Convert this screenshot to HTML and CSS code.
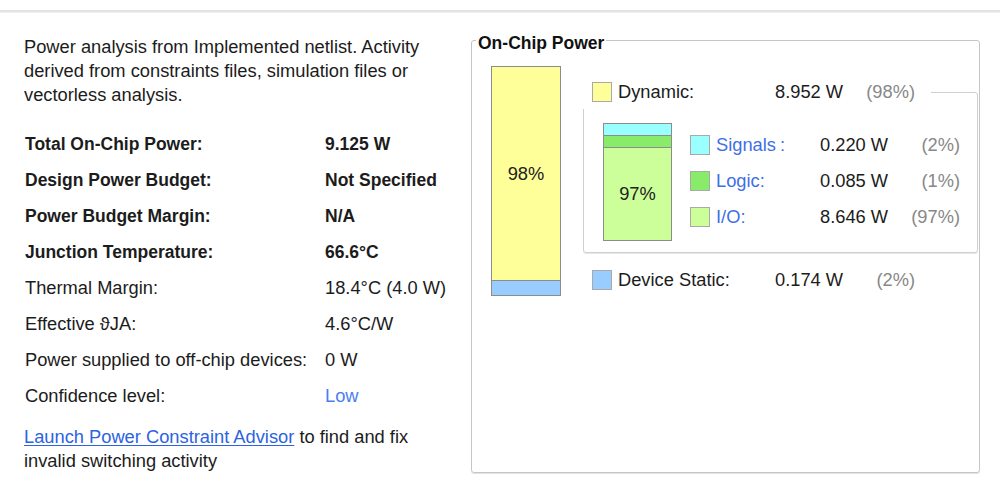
FILE: index.html
```html
<!DOCTYPE html>
<html lang="en">
<head>
<meta charset="utf-8">
<title>Power Summary</title>
<link rel="stylesheet" href="styles.css">
</head>
<body>
<div class="topline"></div>
<main class="main">
  <section class="summary">
    <p class="desc">Power analysis from Implemented netlist. Activity derived from constraints files, simulation files or vectorless analysis.</p>
    <div class="stats">
      <span class="k strong">Total On-Chip Power:</span><span class="v strong">9.125 W</span>
      <span class="k strong">Design Power Budget:</span><span class="v strong">Not Specified</span>
      <span class="k strong">Power Budget Margin:</span><span class="v strong">N/A</span>
      <span class="k strong">Junction Temperature:</span><span class="v strong">66.6°C</span>
      <span class="k">Thermal Margin:</span><span class="v">18.4°C (4.0 W)</span>
      <span class="k">Effective ϑJA:</span><span class="v">4.6°C/W</span>
      <span class="k">Power supplied to off-chip devices:</span><span class="v">0 W</span>
      <span class="k">Confidence level:</span><span class="v low">Low</span>
    </div>
    <p class="advisor"><a class="link" href="#">Launch Power Constraint Advisor</a> to find and fix invalid switching activity</p>
  </section>

  <fieldset class="onchip">
    <legend class="legend">On-Chip Power</legend>
    <div class="chart">
      <div class="bar main-bar">
        <div class="seg seg-dyn">98%</div>
        <div class="seg seg-static"></div>
      </div>
      <div class="breakdown">
        <div class="item head-row">
          <span class="swatch sw-dyn"></span>
          <span class="lbl">Dynamic:</span>
          <span class="val">8.952 W</span>
          <span class="pct">(98%)</span>
        </div>
        <div class="group">
          <div class="bar sub-bar">
            <div class="seg seg-sig"></div>
            <div class="seg seg-logic"></div>
            <div class="seg seg-io">97%</div>
          </div>
          <div class="sub-items">
            <div class="sub-row">
              <span class="swatch sw-sig"></span>
              <span class="sub-lbl"><span class="blue">Signals</span><span class="blue colon-gap">:</span></span>
              <span class="sub-val">0.220 W</span>
              <span class="sub-pct">(2%)</span>
            </div>
            <div class="sub-row">
              <span class="swatch sw-logic"></span>
              <span class="sub-lbl"><span class="blue">Logic</span><span class="blue">:</span></span>
              <span class="sub-val">0.085 W</span>
              <span class="sub-pct">(1%)</span>
            </div>
            <div class="sub-row">
              <span class="swatch sw-io"></span>
              <span class="sub-lbl"><span class="blue">I/O</span><span class="blue">:</span></span>
              <span class="sub-val">8.646 W</span>
              <span class="sub-pct">(97%)</span>
            </div>
          </div>
        </div>
        <div class="item static-row">
          <span class="swatch sw-static"></span>
          <span class="lbl">Device Static:</span>
          <span class="val">0.174 W</span>
          <span class="pct">(2%)</span>
        </div>
      </div>
    </div>
  </fieldset>
</main>
</body>
</html>
```

FILE: styles.css
```css
html, body {
  margin: 0;
  padding: 0;
  background: #ffffff;
}

body {
  font-family: "Liberation Sans", Arial, sans-serif;
  font-size: 18.3px;
  color: #1c1c1c;
  width: 1000px;
  height: 504px;
  overflow: hidden;
}

.topline {
  margin-top: 10px;
  height: 2px;
  background: #e3e3e3;
  border-bottom: 1px solid #f0f0f0;
}

.main {
  display: flex;
  align-items: flex-start;
}

/* ---------- left summary ---------- */
.summary {
  flex: 0 0 471px;
  box-sizing: border-box;
  padding: 22px 24px 0 24px;
}

.desc {
  margin: 0;
  line-height: 24px;
}

.stats {
  margin-top: 19px;
  display: grid;
  grid-template-columns: 300px auto;
  grid-auto-rows: 36px;
  line-height: 36px;
  padding-left: 1px;
}

.k, .v {
  white-space: nowrap;
}

.strong {
  font-weight: bold;
  font-size: 17.5px;
}

.low {
  color: #4a7ef0;
}

.advisor {
  margin: 11px 0 0 0;
  line-height: 24px;
}

.link {
  color: #2d62e2;
  text-decoration: underline;
  text-underline-offset: 2px;
}

/* ---------- on-chip power panel ---------- */
.onchip {
  margin: 14px 0 0 0;
  padding: 0;
  width: 509px;
  height: 446px;
  box-sizing: border-box;
  border: 1px solid #c6c6c6;
  border-radius: 3px;
  box-shadow: 0 1px 0 #e2e2e2;
  min-width: 0;
}

.legend {
  margin-left: 4px;
  padding: 6px 2px 0 2px;
  font-weight: bold;
  font-size: 17.5px;
  line-height: 20px;
  color: #111;
}

.chart {
  display: flex;
  align-items: flex-start;
  margin: 13px 0 0 19px;
}

.bar {
  box-sizing: border-box;
  border: 1px solid #8c8c8c;
  display: flex;
  flex-direction: column;
}

.seg {
  display: flex;
  align-items: center;
  justify-content: center;
  color: #222;
}

.main-bar {
  width: 70px;
  height: 230px;
}

.seg-dyn {
  flex: 1;
  background: #ffff99;
}

.seg-static {
  height: 14px;
  border-top: 1px solid #8c8c8c;
  background: #99ccff;
}

.breakdown {
  margin-left: 22px;
  padding-top: 9px;
  display: flex;
  flex-direction: column;
}

.item {
  display: flex;
  align-items: center;
  height: 34px;
  box-sizing: border-box;
  padding-left: 9px;
  white-space: nowrap;
}

.head-row {
  width: 348px;
  padding-right: 16px;
  background: #ffffff;
  position: relative;
  z-index: 1;
}

.swatch {
  flex: 0 0 auto;
  width: 20px;
  height: 20px;
  box-sizing: border-box;
  border: 1px solid #a9a9a9;
}

.sw-dyn { background: #ffff99; }
.sw-sig { background: #99ffff; }
.sw-logic { background: #88ec6a; }
.sw-io { background: #ccff99; }
.sw-static { background: #99ccff; }

.lbl {
  margin-left: 6px;
  width: 157px;
}

.val {
  width: 67px;
}

.pct {
  width: 73px;
  text-align: right;
  color: #888888;
}

.group {
  margin-top: -17px;
  width: 395px;
  box-sizing: border-box;
  border: 1px solid #d0d0d0;
  border-radius: 3px;
  box-shadow: 0 1px 0 #e6e6e6;
  padding: 30px 17px 11px 19px;
  display: flex;
  align-items: flex-start;
}

.sub-bar {
  width: 69px;
  height: 118px;
}

.seg-sig {
  height: 11px;
  background: #99ffff;
}

.seg-logic {
  height: 11px;
  border-top: 1px solid #8c8c8c;
  background: #88ec6a;
}

.seg-io {
  flex: 1;
  border-top: 1px solid #8c8c8c;
  background: #ccff99;
}

.sub-items {
  flex: 1;
  margin-left: 18px;
  padding-top: 4px;
  display: flex;
  flex-direction: column;
}

.sub-row {
  display: flex;
  align-items: center;
  height: 36px;
  white-space: nowrap;
}

.sub-lbl {
  margin-left: 6px;
  width: 104px;
}

.blue {
  color: #3f6fe6;
}

.colon-gap {
  margin-left: 4px;
}

.sub-val {
  width: 66px;
}

.sub-pct {
  flex: 1;
  text-align: right;
  color: #888888;
}

.static-row {
  margin-top: 10px;
}
```
